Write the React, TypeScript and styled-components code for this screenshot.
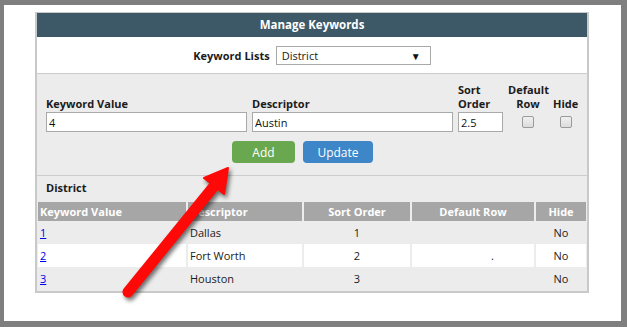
import styled, { createGlobalStyle } from "styled-components";

const GlobalStyle = createGlobalStyle`
  html, body { margin: 0; padding: 0; background: #7f7f7f; }
  body {
    font-family: "Open Sans", "Noto Sans", sans-serif;
    font-size: 11px;
    color: #1b1b1b;
  }
  * { box-sizing: border-box; }
`;

const Page = styled.div`
  position: relative;
  width: 627px;
  height: 327px;
  padding: 5px 6px 6px 4px;
`;

const Frame = styled.div`
  height: 316px;
  background: #fff;
  padding: 7px 32px 0 31px;
`;

const Panel = styled.div`
  border: 2px solid #c9c9c9;
  border-top-width: 1px;
  background: #fff;
`;

const Header = styled.div`
  height: 24px;
  line-height: 24px;
  background: #3d5866;
  color: #fff;
  font-weight: 700;
  font-size: 11.5px;
  text-align: center;
`;

const ListRow = styled.div`
  height: 37px;
  display: flex;
  align-items: center;
  justify-content: center;
  gap: 6px;
  border-bottom: 1px solid #cccccc;
  padding-top: 1px;
`;

const Label = styled.label`
  font-weight: 700;
  line-height: 14px;
`;

const SelectBox = styled.div`
  width: 155px;
  height: 19px;
  border: 1px solid #a9a9a9;
  display: flex;
  align-items: center;
  justify-content: space-between;
  padding: 0 9px 0 5px;
  font-size: 11px;
  span { font-size: 10px; color: #111; }
`;

const Form = styled.div`
  background: #ececec;
  border-bottom: 1px solid #cccccc;
  padding: 9px 9px 12px 9px;
`;

const Fields = styled.div`
  display: grid;
  grid-template-columns: 201px 201px 45px 40px 25px;
  column-gap: 5px;
  row-gap: 1px;
  align-items: end;
`;

const FieldLabel = styled(Label)<{ $center?: boolean }>`
  text-align: ${(p) => (p.$center ? "center" : "left")};
  white-space: nowrap;
`;

const TextInput = styled.input`
  height: 20px;
  width: 100%;
  border: 1px solid #a9a9a9;
  background: #fff;
  padding: 0 2px;
  font-family: inherit;
  font-size: 11px;
  color: #111;
  outline: none;
`;

const Check = styled.input.attrs({ type: "checkbox" })`
  appearance: none;
  width: 12px;
  height: 12px;
  margin: 0 auto;
  align-self: center;
  border: 1px solid #9a9a9a;
  border-radius: 2px;
  background: linear-gradient(#f0f0f0, #dcdcdc);
`;

const Buttons = styled.div`
  display: flex;
  gap: 8px;
  margin-top: 9px;
  padding-left: 186px;
`;

const Button = styled.button<{ $bg: string; $w: number }>`
  width: ${(p) => p.$w}px;
  height: 22px;
  border: none;
  border-radius: 4px;
  background: ${(p) => p.$bg};
  color: #fff;
  font-family: inherit;
  font-size: 12px;
  padding: 0;
`;

const ListSection = styled.div`
  background: #ececec;
  padding: 5px 1px 1px 1px;
`;

const SectionTitle = styled.div`
  font-weight: 700;
  line-height: 14px;
  padding-left: 8px;
  margin-bottom: 7px;
`;

const Table = styled.table`
  width: 548px;
  border-collapse: collapse;
  table-layout: fixed;
`;

const Th = styled.th<{ $align?: string }>`
  height: 19px;
  background: #a6a6a6;
  color: #fff;
  font-weight: 700;
  padding: 0 2px;
  text-align: ${(p) => p.$align || "left"};
  border-left: 2px solid #ededed;
  &:first-child { border-left: none; }
`;

const Tr = styled.tr<{ $alt?: boolean }>`
  background: ${(p) => (p.$alt ? "#fff" : "#ececec")};
`;

const Td = styled.td<{ $align?: string; $pr?: number }>`
  height: 23px;
  padding: 0 ${(p) => p.$pr ?? 2}px 0 2px;
  text-align: ${(p) => p.$align || "left"};
  border-left: 2px solid #ececec;
  &:first-child { border-left: none; }
  a { color: #0000ee; text-decoration: underline; }
`;

const ArrowLayer = styled.svg`
  position: absolute;
  left: 0;
  top: 0;
  pointer-events: none;
  filter: drop-shadow(2px 3px 2px rgba(0, 0, 0, 0.55));
`;

const rows = [
  { id: "1", name: "Dallas", order: "1", def: "" },
  { id: "2", name: "Fort Worth", order: "2", def: "." },
  { id: "3", name: "Houston", order: "3", def: "" },
];

export default function App() {
  return (
    <Page>
      <GlobalStyle />
      <Frame>
        <Panel>
          <Header>Manage Keywords</Header>
          <ListRow>
            <Label>Keyword Lists</Label>
            <SelectBox>
              District<span>▼</span>
            </SelectBox>
          </ListRow>
          <Form>
            <Fields>
              <FieldLabel>Keyword Value</FieldLabel>
              <FieldLabel>Descriptor</FieldLabel>
              <FieldLabel>
                Sort
                <br />
                Order
              </FieldLabel>
              <FieldLabel $center>
                Default
                <br />
                Row
              </FieldLabel>
              <FieldLabel $center>Hide</FieldLabel>
              <TextInput defaultValue="4" />
              <TextInput defaultValue="Austin" />
              <TextInput defaultValue="2.5" />
              <Check />
              <Check />
            </Fields>
            <Buttons>
              <Button $bg="#6aa84f" $w={63}>Add</Button>
              <Button $bg="#3d86c8" $w={70}>Update</Button>
            </Buttons>
          </Form>
          <ListSection>
            <SectionTitle>District</SectionTitle>
            <Table>
              <colgroup>
                <col style={{ width: 149 }} />
                <col style={{ width: 116 }} />
                <col style={{ width: 108 }} />
                <col style={{ width: 124 }} />
                <col style={{ width: 51 }} />
              </colgroup>
              <thead>
                <tr>
                  <Th>Keyword Value</Th>
                  <Th>Descriptor</Th>
                  <Th $align="center">Sort Order</Th>
                  <Th $align="center">Default Row</Th>
                  <Th $align="center">Hide</Th>
                </tr>
              </thead>
              <tbody>
                {rows.map((r, i) => (
                  <Tr key={r.id} $alt={i % 2 === 1}>
                    <Td>
                      <a href="#">{r.id}</a>
                    </Td>
                    <Td>{r.name}</Td>
                    <Td $align="center">{r.order}</Td>
                    <Td $align="right" $pr={40}>{r.def}</Td>
                    <Td $align="center">No</Td>
                  </Tr>
                ))}
              </tbody>
            </Table>
          </ListSection>
        </Panel>
      </Frame>
      <ArrowLayer width="627" height="327" viewBox="0 0 627 327">
        <line x1="128" y1="292" x2="215" y2="185" stroke="#ff0808" strokeWidth="11" strokeLinecap="round" />
        <polygon points="228,168 224,194 204,178" fill="#ff0808" stroke="#ff0808" strokeWidth="2" strokeLinejoin="round" />
      </ArrowLayer>
    </Page>
  );
}
